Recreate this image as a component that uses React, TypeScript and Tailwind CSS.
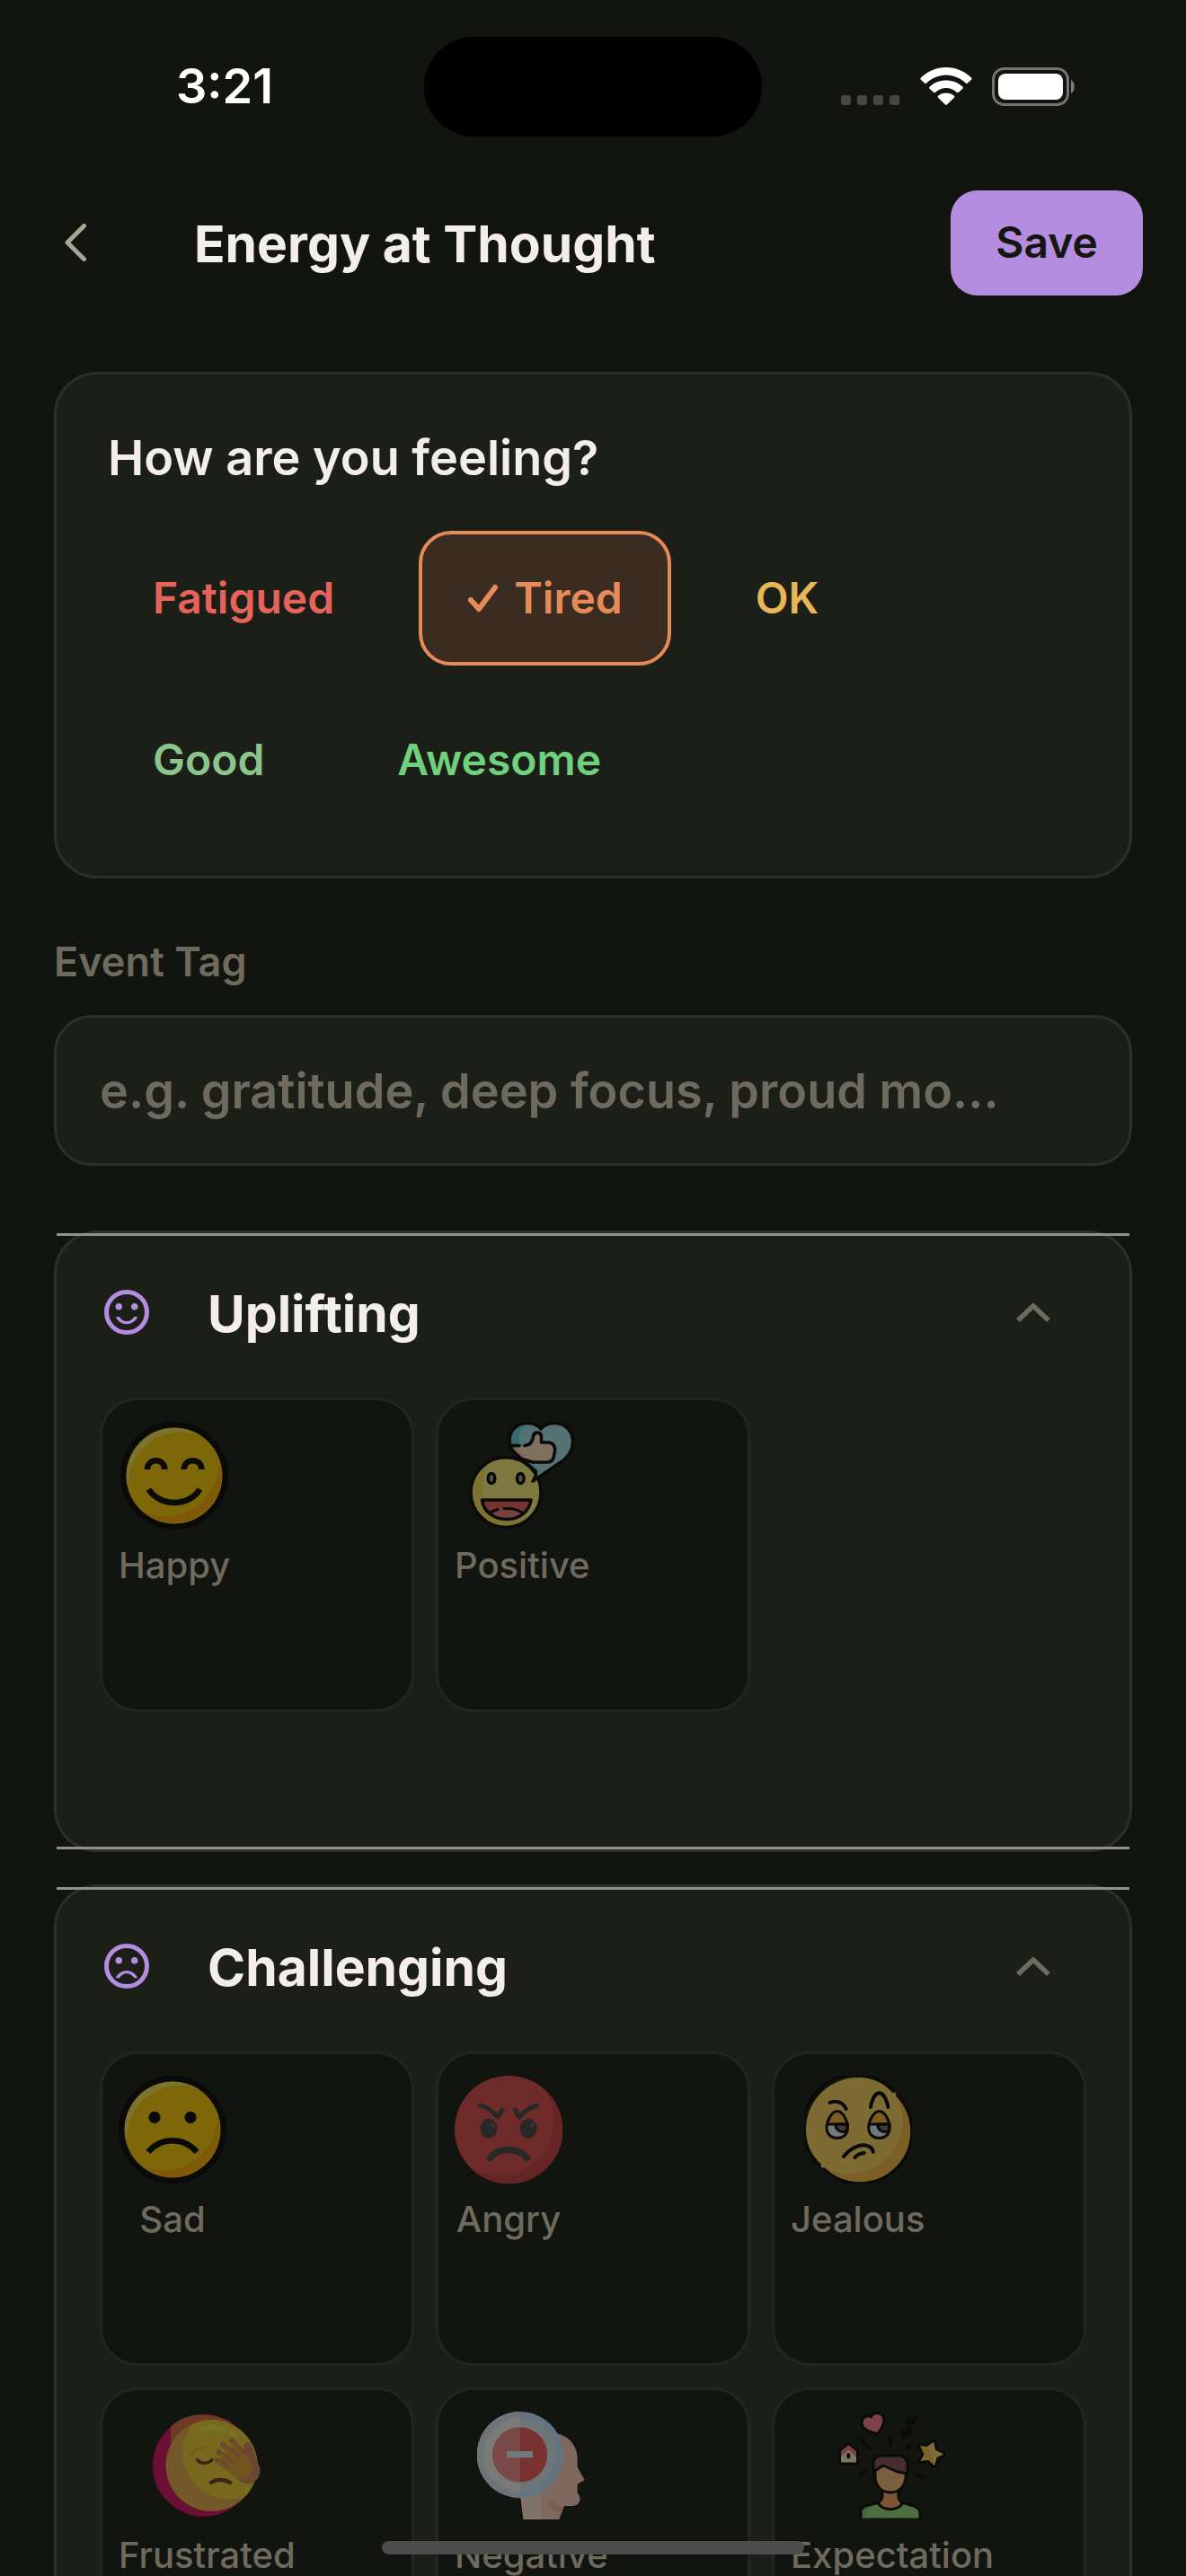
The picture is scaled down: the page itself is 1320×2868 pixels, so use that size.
import { useState } from "react";
import type { ReactNode } from "react";

const FEELINGS = [
  { label: "Fatigued", text: "text-[#e6635c]" },
  { label: "Tired", text: "text-[#e58a58]" },
  { label: "OK", text: "text-[#e8b755]" },
  { label: "Good", text: "text-[#8bc58c]" },
  { label: "Awesome", text: "text-[#6fd07d]" },
];

const INK = "#0a0b08";

function HappyIcon() {
  return (
    <svg viewBox="0 0 120 120" className="size-[120px]" fill="none">
      <circle cx="60" cy="60" r="60" fill={INK} />
      <circle cx="60" cy="60" r="53.5" fill="#7d6708" />
      <path d="M9.5 77A53.5 53.5 0 0 1 91 16.5A58 58 0 0 0 9.5 77Z" fill="#7d7330" />
      <path d="M110 43A53.5 53.5 0 0 1 24 99.5A60 60 0 0 0 110 43Z" fill="#7e5908" />
      <g stroke={INK} strokeWidth="6.5">
        <path d="M30 53C30 40 49.3 40 49.3 53" />
        <path d="M70.8 53C70.8 40 90.4 40 90.4 53" />
        <path d="M31.5 75C44 95 76 95 88.5 75" />
      </g>
    </svg>
  );
}

function SadIcon() {
  return (
    <svg viewBox="0 0 120 120" className="size-[120px]" fill="none">
      <circle cx="60" cy="60" r="60" fill={INK} />
      <circle cx="60" cy="60" r="53.5" fill="#7d6708" />
      <path d="M9.5 77A53.5 53.5 0 0 1 91 16.5A58 58 0 0 0 9.5 77Z" fill="#7d7330" />
      <path d="M110 43A53.5 53.5 0 0 1 24 99.5A60 60 0 0 0 110 43Z" fill="#7e5908" />
      <circle cx="40" cy="46.3" r="6.6" fill={INK} />
      <circle cx="80" cy="46.3" r="6.6" fill={INK} />
      <path d="M33 85C47 68 73 68 87 85" stroke={INK} strokeWidth="6.5" />
    </svg>
  );
}

const BUBBLE =
  "M72 66C75 62 76 58 75 55L57 39C49 33 46 28 46 21C46 8 56 1.5 66 1.5C73 1.5 78 4 81 8C84 4 89 1.5 96 1.5C108 1.5 116.5 10 116.5 22C116.5 32 112 37 106 43Z";

function PositiveIcon() {
  return (
    <svg viewBox="0 0 120 120" className="size-[120px]" fill="none" strokeLinecap="round" strokeLinejoin="round">
      <circle cx="42" cy="78.5" r="39" fill="#7f7840" />
      <path d="M22 46C-4 66 -2 114 40 117C56 118 64 112 66 108C24 118 6 84 22 46Z" fill="#7d7232" />
      <circle cx="42" cy="78.5" r="39" stroke={INK} strokeWidth="3.5" />
      <g fill="#57514f" stroke={INK} strokeWidth="3.5">
        <ellipse cx="26" cy="63" rx="3.8" ry="5.5" />
        <ellipse cx="58.3" cy="63" rx="3.8" ry="5.5" />
      </g>
      <path d="M15.5 87H70C68 100 57 108.5 43 108.5S17 100 15.5 87Z" fill="#763331" />
      <path d="M25 101C34 94 52 94 61 101C53 110 34 110 25 101Z" fill="#77403f" />
      <path d="M15.5 87H70C68 100 57 108.5 43 108.5S17 100 15.5 87Z" stroke={INK} strokeWidth="3.5" />
      <path d="M25 100.5L33 97.5M40 96.5C47 96 55 97.5 60 101" stroke={INK} strokeWidth="3" />
      <path d={BUBBLE} fill="#547274" />
      <path d="M66 3C52 3 46 12 47 27H59C54 17 58 8 66 3ZM64 44L75 55L73 64L80 54Z" fill="#366b6f" />
      <path
        d="M47 27H62C69 26 72 22 72.5 16C73 10.5 81 10.5 81.5 16V23H90C96 24 97 28 96.5 33L95 40C94 44 91 45 87 45H72L60 41C53 37 48 33 47 27Z"
        fill="#7e715f"
      />
      <path d="M47 27H53L66 43L60 41C53 37 48 33 47 27Z" fill="#7d6650" />
      <path d={BUBBLE} stroke={INK} strokeWidth="3.5" />
      <path
        d="M46 26.5H57M63 26.5C69 26 72 22 72.5 16C73 10.5 81 10.5 81.5 16V23H90C96 24 97 28 96.5 33L95 40C94 44 91 45 87 45H72L62 42"
        stroke={INK}
        strokeWidth="3.5"
      />
    </svg>
  );
}

function AngryIcon() {
  return (
    <svg viewBox="0 0 120 120" className="size-[120px]" fill="none" strokeLinecap="round" strokeLinejoin="round">
      <circle cx="60" cy="60" r="60" fill="#6f2b29" />
      <path d="M100 15.3A60 60 0 1 1 16 100.7A61 61 0 0 0 100 15.3Z" fill="#652524" />
      <g fill="#282927">
        <ellipse cx="38" cy="58.7" rx="9.5" ry="11" />
        <ellipse cx="82" cy="58.7" rx="9.5" ry="11" />
      </g>
      <g fill="#393a37">
        <ellipse cx="42.5" cy="55" rx="1.6" ry="2.4" />
        <ellipse cx="86.5" cy="55" rx="1.6" ry="2.4" />
      </g>
      <g stroke="#282927" strokeWidth="5">
        <path d="M28.5 33.3C36 35 42 39 48 46L53 38" />
        <path d="M91.5 33.3C84 35 78 39 72 46L67.5 38" />
      </g>
      <path d="M39.5 91.5C50 79.5 70 79.5 80.5 91.5" stroke="#282927" strokeWidth="7.5" />
    </svg>
  );
}

// Half-closed eye, reused for both sides of the jealous face
function SleepyEye() {
  const outline =
    "M36.8 39.5C43 39.5 48.5 50 48.5 58C48.5 65 43.5 69.5 36.8 69.5S25 65 25 58C25 50 31 39.5 36.8 39.5Z";
  return (
    <g>
      <path d={outline} fill="#73787a" />
      <path d="M26 53.5C28 46 32 40 36.8 40S46 46 48 53.5Z" fill="#7e5b22" />
      <path d="M35 54C35 60 40 64 47 62L48.5 54Z" fill="#423b3e" stroke={INK} strokeWidth="3" />
      <path d="M26 54H48" stroke={INK} strokeWidth="3" />
      <path d={outline} stroke={INK} strokeWidth="3" />
    </g>
  );
}

function JealousIcon() {
  return (
    <svg viewBox="0 0 120 120" className="size-[120px]" fill="none" strokeLinecap="round" strokeLinejoin="round">
      <circle cx="60" cy="60" r="58" fill="#7e6a33" />
      <path d="M102 20A58 58 0 1 1 19 101A60 60 0 0 0 102 20Z" fill="#7b6026" />
      <path d="M99 17A58 58 0 1 0 17 99M22 104A58 58 0 0 0 104 22" stroke={INK} strokeWidth="3.5" />
      <SleepyEye />
      <g transform="translate(46.7 0)">
        <SleepyEye />
      </g>
      <g stroke={INK} strokeWidth="4">
        <path d="M28.5 30C35 27 43 29 46.7 37" />
        <path d="M74 35C78 14 89 14 93.5 35" />
        <path d="M44 90C52 80 62 76.5 68 77.5C73 78.5 76.5 81 76.7 85" />
        <path d="M56.5 91Q60 86.5 67 86" />
      </g>
    </svg>
  );
}

function FrustratedIcon() {
  return (
    <svg viewBox="0 0 120 120" className="size-[120px]" fill="none" strokeLinecap="round" strokeLinejoin="round">
      <clipPath id="frustrated-face">
        <circle cx="65.5" cy="60" r="51" />
      </clipPath>
      <circle cx="56.7" cy="60" r="56.7" fill="#6b0f35" />
      <path d="M20 17C36 0 66 -1 87 12L70 60H20Z" fill="#6e3a24" />
      <circle cx="65.5" cy="60" r="51" fill="#73592a" />
      <circle cx="85" cy="46" r="51.5" fill="#77691d" clipPath="url(#frustrated-face)" />
      <path d="M56 19.5C62 17.5 71 17.5 78 20M88 24L90 25.5" stroke="#777328" strokeWidth="6.5" />
      <path d="M42.7 49.5C46 43 51 40 58 40.5" stroke="#735b27" strokeWidth="2.7" />
      <path d="M49.5 53.5C53 58.5 62 58.5 66 53.5" stroke="#40201b" strokeWidth="3.5" />
      <path d="M65 79C71 75 80 75 86 79" stroke="#40201b" strokeWidth="4.5" />
      <path
        d="M72 53L95 76C102 83 112 81 117 74C121 68 120 61 116 56L110 37C108 33 102 33 101 38L103 52Z"
        fill="#6b4731"
      />
      <path d="M71 57L86 68C94 78 108 77 110 65C111 58 108 53 103 48L91 36Z" fill="#72541e" />
      <g stroke="#6b4731" strokeWidth="6">
        <path d="M88 32.5L101 47" />
        <path d="M78 36.5L93 50" />
        <path d="M73.5 45L87 56" />
        <path d="M72 54.5L82 62" />
      </g>
      <g stroke="#72541e" strokeWidth="3.5">
        <path d="M80.5 40L94 53" />
        <path d="M76 48L88 59" />
        <path d="M89 36L101 50" />
        <path d="M73 57L82 64" />
      </g>
    </svg>
  );
}

function NegativeIcon() {
  return (
    <svg viewBox="0 0 120 120" className="size-[120px]" fill="none">
      <path
        d="M48 92L51.5 120H91.3L97 105H106C112 105 114.5 101 114.5 97C114.5 94 113.5 92 111.7 91V80.7L119.7 76.3L111.7 62V52C111.5 38 102 27 89.7 24.7Z"
        fill="#7f685d"
      />
      <path d="M48 92L51.5 120H71V85Z" fill="#7f7268" />
      <path d="M83.5 99L79 104L86.5 112H94L97 105H89Z" fill="#7c5b50" />
      <circle cx="47.7" cy="48" r="48" fill="#627480" />
      <path d="M47.7 0A48 48 0 0 0 47.7 96Z" fill="#6d747a" />
      <circle cx="47.7" cy="48" r="41" fill="#6d7579" />
      <path d="M47.7 7A41 41 0 0 0 47.7 89Z" fill="#7a7a76" />
      <circle cx="47.7" cy="48" r="30.5" fill="#7a3230" />
      <path d="M47.7 17.5A30.5 30.5 0 0 0 47.7 78.5Z" fill="#7b4a48" />
      <path d="M33 44H62V51.3H33Z" fill="#6f7a7d" />
    </svg>
  );
}

function ExpectationIcon() {
  return (
    <svg viewBox="0 0 120 120" className="size-[120px]" fill="none" stroke={INK} strokeWidth="3" strokeLinecap="round" strokeLinejoin="round">
      <g strokeWidth="6" paintOrder="stroke">
        <path d="M43 23C34 21 28 18 27.5 12.5C28 7 33.5 5 37 8C38.500 3 45 1 48.500 6C51 11 48 17 43 23Z" fill="#7c4249" />
        <path d="M91 38L99 39L106 34L108 43L117 47.3L109.5 51L107 60L100.5 54L91.500 55L95.500 47.500Z" fill="#7a6426" />
        <path d="M3 56.5V44.500L11.3 37.500L20 44.500V56.5Z" fill="#7c7b62" />
      </g>
      <path d="M99 39L106 34L108 43L117 47.3L109.5 51L107 60L104 47Z" fill="#7c6e3a" stroke="none" />
      <path d="M3 50.500V44.5L11.3 37.500L20 44.5V50.500L11.3 43Z" fill="#7a4349" stroke="none" />
      <path d="M11.3 48V50.5" strokeWidth="4" />
      <path d="M84 11C80 5 75 9 78 14C83 20 80 26 75 25C72 25 70 23 71 21M86 6L72 29" />
      <path d="M24.7 30.7L35 41M58 30.7V37M79 38L77 40.7M29.7 66L24.7 70M87 69.7L93.5 73.5" strokeWidth="4" />
      <path d="M49 88V95C48 99 46 101 43 103C50 112 66 112 73 103C70 101 67 99 67 95V88Z" fill="#7a5637" />
      <path d="M26 118.5V110C27 106 30 105 34 104L44 101.5C50 111 66 111 72 101.5L84 105C89 107 90 109 90 113V118.5Z" fill="#4d6e3e" stroke="none" />
      <path d="M26 118.5V110C26 107 29 106 34 104.5L42 103L35 107C31 109 31 112 31 118.5Z" fill="#3a6640" stroke="none" />
      <path d="M25 119V110C26 106 29 105 34 104L44 101.5C50 111 66 111 72 101.5L84 105C89 107 91 109 91 113V119" />
      <path d="M41 64V74C42 84 49 90 58 90S74 84 75 74V64L50 58Z" fill="#7b5e3e" />
      <path d="M39 67V58C39 52 43 49 48 49H68C73 49 77 53 77 58V69L66 67L50 60Z" fill="#482f2f" />
    </svg>
  );
}

const UPLIFTING = [
  { label: "Happy", Icon: HappyIcon },
  { label: "Positive", Icon: PositiveIcon },
];

const CHALLENGING = [
  { label: "Sad", Icon: SadIcon },
  { label: "Angry", Icon: AngryIcon },
  { label: "Jealous", Icon: JealousIcon },
  { label: "Frustrated", Icon: FrustratedIcon },
  { label: "Negative", Icon: NegativeIcon },
  { label: "Expectation", Icon: ExpectationIcon },
];

function StatusBar() {
  return (
    <div className="grid h-48 grid-cols-[1fr_376px_1fr] items-center">
      <span className="pl-[196px] text-[54px] leading-[60px] font-semibold text-white">3:21</span>
      <div className="h-[111px] rounded-full bg-black" />
      <div className="flex items-center gap-[22px] pl-[88px]">
        <svg viewBox="0 0 66 42" className="h-[42px] w-[66px]" fill="#464743">
          <rect y="31" width="11" height="11" rx="3" />
          <rect x="18" y="31" width="11" height="11" rx="3" />
          <rect x="36" y="31" width="11" height="11" rx="3" />
          <rect x="54" y="31" width="11" height="11" rx="3" />
        </svg>
        <svg viewBox="0 0 58 42" className="h-[42px] w-[58px]" fill="#fff">
          <path d="M29 0C40 0 50 4.5 57 11.5C57.8 12.3 57.8 13 57 13.8L53 17.5C52.3 18.2 51.5 18.2 50.8 17.5C45 12 37 8.5 29 8.5S13 12 7.2 17.5C6.5 18.2 5.7 18.2 5 17.5L1 13.8C.2 13 .2 12.3 1 11.5C8 4.5 18 0 29 0Z" />
          <path d="M29 14.5C36 14.5 42.5 17 47.3 21.5C48 22.3 48 23 47.3 23.7L43 27.7C42.3 28.3 41.5 28.3 40.8 27.7C37.5 24.8 33.5 23 29 23S20.5 24.8 17.2 27.7C16.5 28.3 15.7 28.3 15 27.7L10.7 23.7C10 23 10 22.3 10.7 21.5C15.5 17 22 14.5 29 14.5Z" />
          <path d="M29 28.5C32.5 28.5 35.5 29.7 37.8 31.5C38.6 32.2 38.6 33 37.9 33.7L30.2 41.3C29.5 42 28.5 42 27.8 41.3L20.1 33.7C19.4 33 19.4 32.2 20.2 31.5C22.5 29.7 25.5 28.5 29 28.5Z" />
        </svg>
        <svg viewBox="0 0 94 43" className="h-[43px] w-[94px]" fill="none">
          <rect x="1.5" y="1.5" width="83" height="40" rx="12" stroke="#73746f" strokeWidth="3" />
          <rect x="7" y="7" width="72" height="29" rx="8" fill="#fff" />
          <path d="M88 14C93 16 93 27 88 29Z" fill="#7f807c" />
        </svg>
      </div>
    </div>
  );
}

type SectionProps = {
  title: string;
  mouth: string;
  items: { label: string; Icon: () => ReactNode }[];
};

function EmotionSection({ title, mouth, items }: SectionProps) {
  const [open, setOpen] = useState(true);
  const [selected, setSelected] = useState<string | null>(null);

  return (
    <section className="relative rounded-[48px] border-[3px] border-[#2c2e29] bg-[#1c1e18] px-12 pb-[153px]">
      {/* Expansion tile dividers, drawn square over the rounded card */}
      <div className="absolute inset-x-0 top-0 h-[3px] bg-[#8c9488]" />
      <div className="absolute inset-x-0 bottom-0 h-[3px] bg-[#90928a]" />

      <button
        type="button"
        aria-expanded={open}
        onClick={() => setOpen(!open)}
        className="flex h-[183px] w-full items-center pb-2 text-left"
      >
        <svg viewBox="0 0 24 24" className="size-[60px] text-[#b48ce0]" fill="currentColor">
          <circle cx="12" cy="12" r="9" fill="none" stroke="currentColor" strokeWidth="2" />
          <circle cx="8.5" cy="9.5" r="1.5" />
          <circle cx="15.5" cy="9.5" r="1.5" />
          <path d={mouth} />
        </svg>
        <h2 className="flex-1 pt-1 pl-[60px] text-[57px] leading-[72px] font-bold text-[#f3efe8]">{title}</h2>
        <svg viewBox="0 0 38 22" className="mr-10 h-[22px] w-[38px]" fill="none" stroke="#6f6a5e" strokeWidth="5.5">
          <path d="M2 20L19 4L36 20" />
        </svg>
      </button>

      {open && (
        <div className="grid grid-cols-3 gap-6">
          {items.map(({ label, Icon }) => (
            <button
              key={label}
              type="button"
              aria-pressed={selected === label}
              onClick={() => setSelected(label)}
              className="flex aspect-square items-start rounded-[42px] border-[3px] border-[#232520] bg-[#12140f] px-[18px] pt-6"
            >
              <span className="flex flex-col items-center gap-4">
                <Icon />
                <span className="text-[40px] leading-[48px] font-medium text-[#6f6a5e]">{label}</span>
              </span>
            </button>
          ))}
        </div>
      )}
    </section>
  );
}

export default function App() {
  const [feeling, setFeeling] = useState("Tired");
  const [tag, setTag] = useState("");

  return (
    <div className="relative flex h-screen flex-col overflow-hidden bg-[#12140f] font-['Inter',sans-serif]">
      <StatusBar />

      <header className="flex h-[156px] items-center pr-12 pl-[60px]">
        <button type="button" aria-label="Back" className="flex h-[120px] w-[156px] items-center pl-3">
          <svg viewBox="0 0 24 42" className="h-[42px] w-6" fill="none" stroke="#a8a496" strokeWidth="5" strokeLinecap="round" strokeLinejoin="round">
            <path d="M21.5 2.5L3 21L21.5 39.5" />
          </svg>
        </button>
        <h1 className="flex-1 pt-1 text-[57px] leading-[72px] font-bold text-[#f3efe8]">Energy at Thought</h1>
        <button
          type="button"
          className="h-[117px] rounded-[30px] bg-[#b48ce0] px-[50px] text-[48px] leading-[60px] font-semibold text-[#14160f]"
        >
          Save
        </button>
      </header>

      <main className="flex-1 overflow-y-auto px-[60px] pt-[66px] pb-24 [scrollbar-width:none]">
        <section className="rounded-[48px] border-[3px] border-[#2c2e29] bg-[#1c1e18] px-[57px] pt-[60px] pb-[54px]">
          <h2 className="text-[54px] leading-[66px] font-semibold text-[#f3efe8]">How are you feeling?</h2>
          <div className="-mx-1 mt-12 flex flex-wrap gap-x-10 gap-y-[30px]">
            {FEELINGS.map((f) => (
              <button
                key={f.label}
                type="button"
                aria-pressed={feeling === f.label}
                onClick={() => setFeeling(f.label)}
                className={`flex h-[150px] items-center gap-4 rounded-[36px] border-4 px-[50px] text-[48px] leading-[60px] font-semibold ${f.text} ${
                  feeling === f.label ? "border-[#e58a58] bg-[#3a2c20]" : "border-transparent"
                }`}
              >
                {feeling === f.label && (
                  <svg viewBox="0 0 36 32" className="h-8 w-9" fill="none" stroke="currentColor" strokeWidth="6" strokeLinecap="round" strokeLinejoin="round">
                    <path d="M4 18L13 28L31 4" />
                  </svg>
                )}
                {f.label}
              </button>
            ))}
          </div>
        </section>

        <label htmlFor="event-tag" className="mt-[66px] block text-[45px] leading-[54px] font-semibold text-[#6f6a5e]">
          Event Tag
        </label>
        <input
          id="event-tag"
          type="text"
          value={tag}
          onChange={(e) => setTag(e.target.value)}
          placeholder="e.g. gratitude, deep focus, proud mo..."
          className="mt-8 h-[168px] w-full rounded-[42px] border-[3px] border-[#2d2f2a] bg-[#1c1e18] px-12 text-[54px] font-semibold text-[#f3efe8] outline-none placeholder:text-[#6f6a5e]"
        />

        <div className="mt-[72px] flex flex-col gap-9">
          <EmotionSection
            title="Uplifting"
            items={UPLIFTING}
            mouth="M7.1 14C8 16 9.9 17.300 12 17.300S16 16 16.900 14H15.300C14.600 15.200 13.400 16 12 16S9.400 15.200 8.700 14Z"
          />
          <EmotionSection
            title="Challenging"
            items={CHALLENGING}
            mouth="M7.1 17.300C8 15.300 9.900 14 12 14S16 15.300 16.900 17.300H15.300C14.600 16.100 13.400 15.300 12 15.300S9.400 16.100 8.700 17.300Z"
          />
        </div>
      </main>

      {/* Home indicator */}
      <div className="absolute bottom-6 left-1/2 h-[15px] w-[470px] -translate-x-1/2 rounded-full bg-[#4c4c4c]" />
    </div>
  );
}
